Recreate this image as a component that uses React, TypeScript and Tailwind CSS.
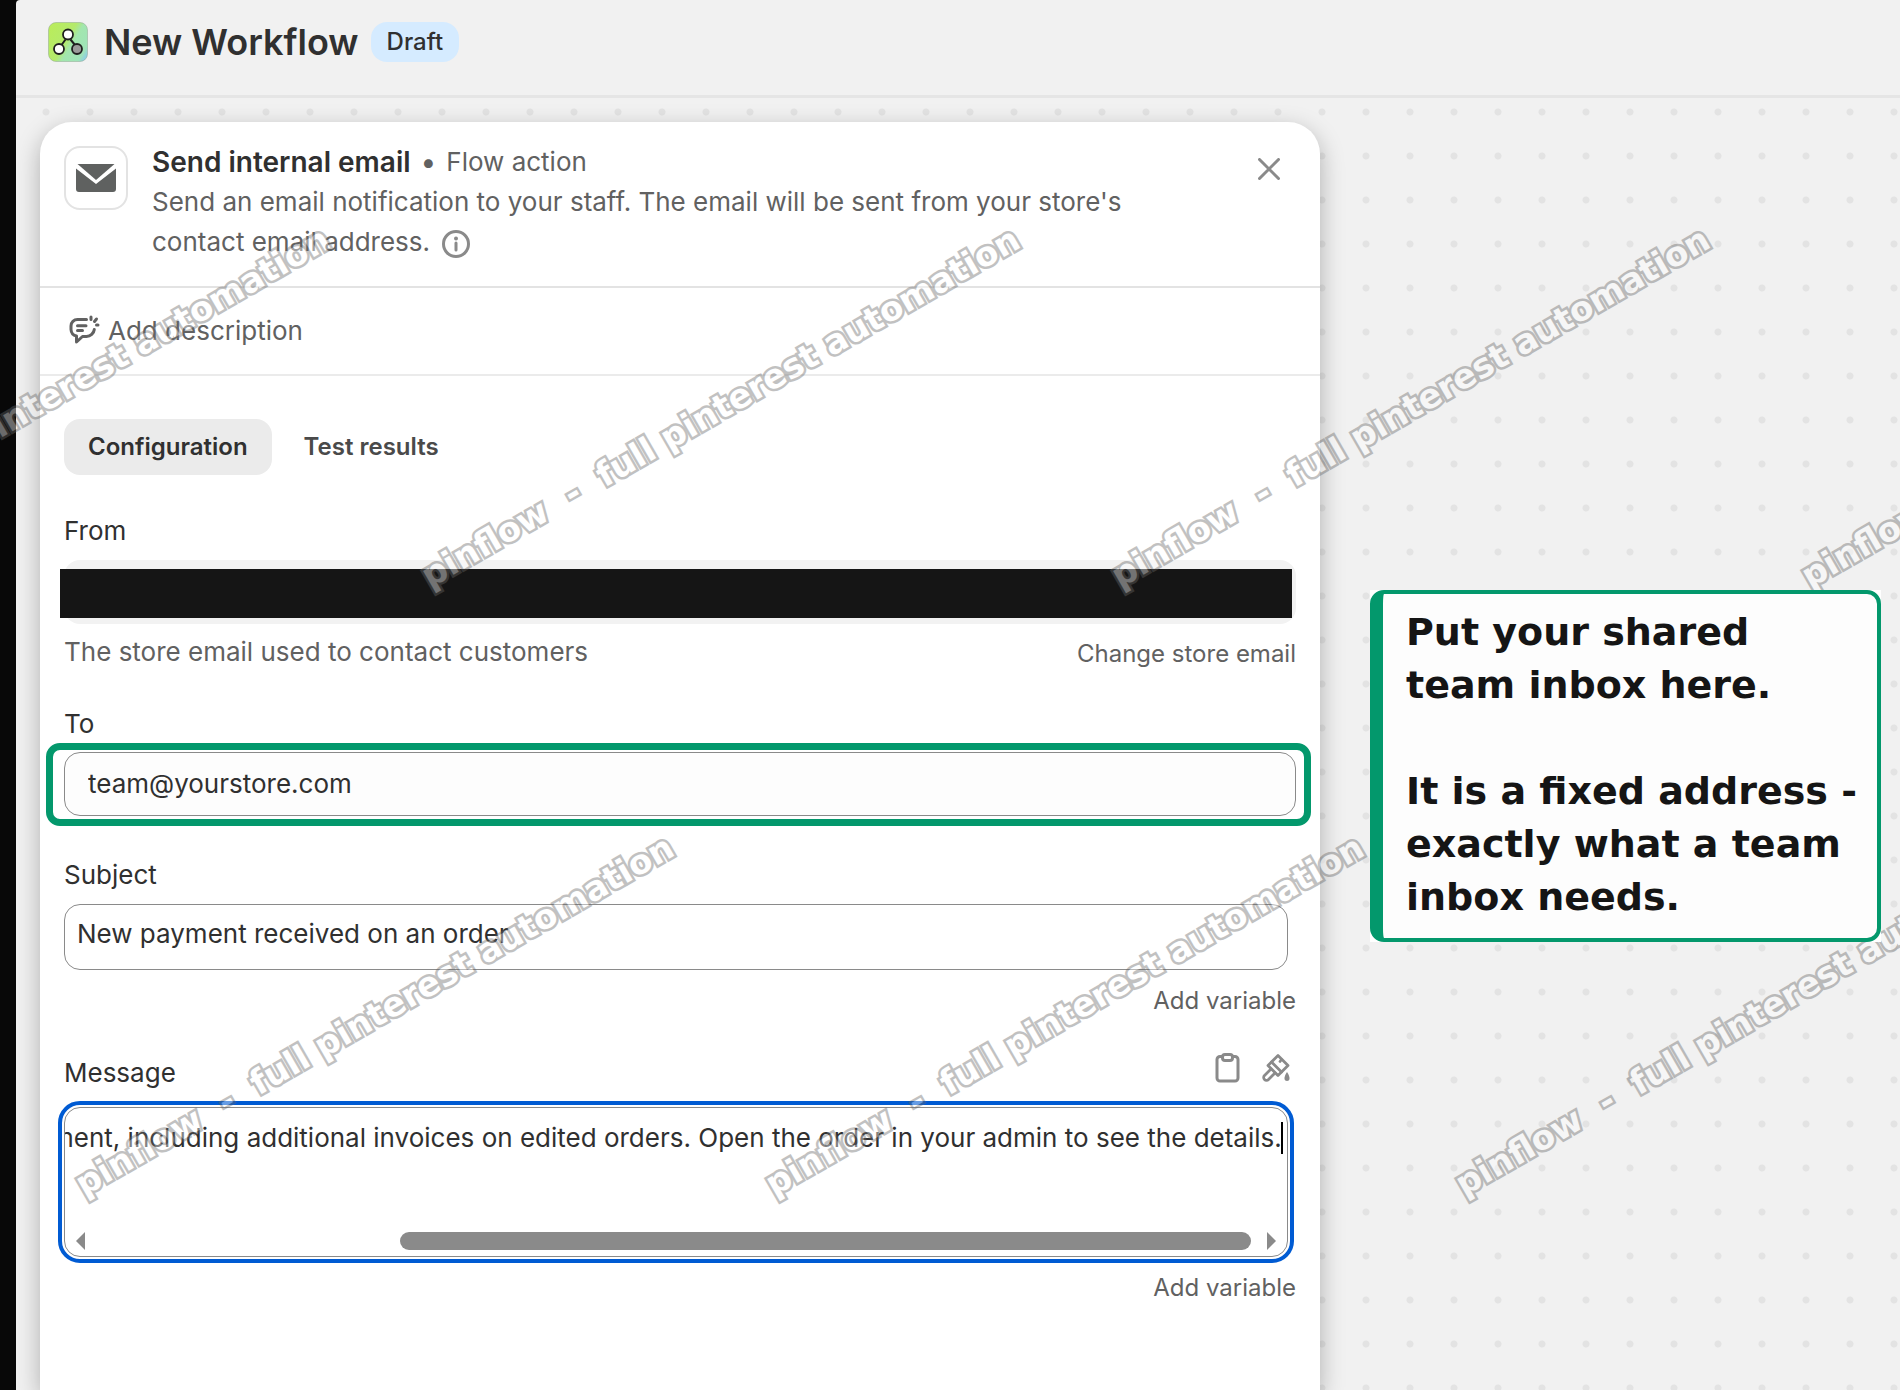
import { useEffect, useRef } from 'react';

const MARK_TEXT = 'pinflow\u00a0\u00a0-\u00a0\u00a0full pinterest automation';

function Watermark({ place }: { place: string }) {
  return (
    <span
      className={`absolute origin-bottom-left -rotate-30 whitespace-nowrap font-['DejaVu_Sans'] text-[34px] leading-8 font-bold text-white opacity-40 [-webkit-text-stroke:5px_#666] [paint-order:stroke_fill] ${place}`}
    >
      {MARK_TEXT}
    </span>
  );
}

function WorkflowLogo() {
  return (
    <svg viewBox="0 0 40 40" className="size-10 shrink-0" aria-hidden="true">
      <defs>
        <linearGradient id="logo" x1="0" y1="0.2" x2="1" y2="0.8">
          <stop offset="0" stopColor="#b9ec5c" />
          <stop offset="0.45" stopColor="#b4ea6c" />
          <stop offset="0.6" stopColor="#a2e6ae" />
          <stop offset="0.9" stopColor="#9fe4b8" />
          <stop offset="1" stopColor="#8fd0e0" />
        </linearGradient>
      </defs>
      <rect x="0.5" y="0.5" width="39" height="39" rx="7.5" fill="url(#logo)" stroke="#8fa68f" strokeOpacity="0.5" />
      <path d="M17.5 17.5 13.5 23M22.5 17.5 27 23" stroke="#1f1f1f" strokeWidth="2" />
      <circle cx="20" cy="12.500" r="5" fill="#fff" stroke="#1f1f1f" strokeWidth="1.800" />
      <circle cx="11" cy="27" r="5" fill="#fff" stroke="#1f1f1f" strokeWidth="1.800" />
      <circle cx="29" cy="27" r="5" fill="#9a9a9a" stroke="#1f1f1f" strokeWidth="1.800" />
    </svg>
  );
}

const linkClass = 'text-2xl leading-8 text-[#616161]';
const labelClass = 'text-[26px] leading-10 text-[#303030]';

export default function App() {
  const message = useRef<HTMLTextAreaElement>(null);
  useEffect(() => {
    if (message.current) message.current.scrollLeft = message.current.scrollWidth;
  }, []);

  return (
    <div className="relative flex min-h-screen overflow-hidden bg-[#080808] font-['Inter',sans-serif] text-[#303030]">
      <div className="ml-4 flex min-w-0 flex-1 flex-col rounded-tl-sm bg-[#f1f1f1]">
        <header className="flex h-[98px] items-start border-b-[3px] border-[#e5e5e5] px-8 pt-[22px]">
          <WorkflowLogo />
          <h1 className="ml-4 text-4xl leading-10 font-semibold">New Workflow</h1>
          <span className="ml-3 rounded-2xl bg-[#d5ebff] px-4 text-2xl leading-10 font-medium">Draft</span>
        </header>

        <main className="flex flex-1 items-stretch bg-[radial-gradient(circle,#e3e3e3_3px,transparent_4px)] bg-size-[44px_44px] bg-position-[8px_-8px] pt-6 pr-[19px] pl-6">
          <section className="min-w-0 flex-1 rounded-t-[32px] bg-white shadow-[0_8px_24px_rgba(0,0,0,0.28)]">
            <div className="flex items-start border-b-2 border-[#e3e3e3] px-6 pt-6 pb-6">
              <div className="flex size-16 shrink-0 items-center justify-center rounded-2xl border-2 border-[#e3e3e3]">
                <svg viewBox="0 0 40 28" className="h-7 w-10" fill="#5f6160" aria-hidden="true">
                  <path d="M1.500 0h37L20 16z" />
                  <path d="M0 4.500 20 20 40 4.500V25a3 3 0 0 1-3 3H3a3 3 0 0 1-3-3z" />
                </svg>
              </div>
              <div className="-mt-1 ml-6 flex-1 text-[26px] leading-10 text-[#616161]">
                <h2 className="flex">
                  <span className="text-[28px] font-semibold text-[#303030]">Send internal email</span>
                  <span className="mx-2.5 text-[28px]">•</span>
                  <span>Flow action</span>
                </h2>
                <p className="max-w-[1000px]">
                  Send an email notification to your staff. The email will be sent from your store's contact email
                  address.
                  <svg viewBox="0 0 28 28" className="ml-3 inline size-7" fill="none" stroke="#8a8a8a" aria-hidden="true">
                    <circle cx="14" cy="14" r="12.500" strokeWidth="3" />
                    <path d="M14 13v7" strokeWidth="3" strokeLinecap="round" />
                    <circle cx="14" cy="8.500" r="2" fill="#8a8a8a" stroke="none" />
                  </svg>
                </p>
              </div>
              <button type="button" aria-label="Close" className="mt-2 mr-3 p-1">
                <svg viewBox="0 0 22 22" className="size-[22px]" stroke="#8a8a8a" strokeWidth="3" strokeLinecap="round">
                  <path d="M1.500 1.500 20.500 20.500M20.500 1.500 1.500 20.500" />
                </svg>
              </button>
            </div>

            <div className="flex h-[88px] items-center border-b-2 border-[#ebebeb] px-7">
              <button type="button" className="flex items-center gap-2 text-[26px] leading-10 text-[#616161]">
                <svg viewBox="0 0 32 32" className="size-8" fill="none" stroke="#616161" strokeWidth="3" strokeLinecap="round" aria-hidden="true">
                  <path d="M18.500 4.500H9.500A6.500 6.500 0 0 0 3 11v3.500a7 7 0 0 0 5.500 6.500v6l6-5.500H18.500a8 8 0 0 0 7.800-7" strokeLinejoin="round" />
                  <path d="M9.500 10.700H18M9.500 15.500h5M23 2v2.500M28.500 4l-2 2.500M28.500 10h1.500" />
                </svg>
                Add description
              </button>
            </div>

            <form className="px-6 pt-[43px] pb-[63px]" onSubmit={(e) => e.preventDefault()}>
              <div className="flex gap-2 text-2xl leading-8">
                <button type="button" className="rounded-2xl bg-[#ebebeb] px-6 py-3 font-[580]">Configuration</button>
                <button type="button" className="rounded-2xl px-6 py-3 font-[580] text-[#4a4a4a]">Test results</button>
              </div>

              <div className="mt-9">
                <label htmlFor="from" className={`block ${labelClass}`}>From</label>
                <div className="relative mt-[9px]">
                  <input id="from" readOnly className="block h-16 w-full rounded-2xl bg-[#f2f2f2] px-6" />
                  <div className="absolute top-[9px] right-1 -left-1 h-[49px] bg-[#151515]" />
                </div>
                <div className="mt-2 flex items-end justify-between">
                  <p className="text-[26px] leading-10 text-[#616161]">The store email used to contact customers</p>
                  <button type="button" className={`${linkClass} pb-0.5`}>Change store email</button>
                </div>
              </div>

              <div className="mt-8">
                <label htmlFor="to" className={`block ${labelClass}`}>To</label>
                <div className="relative mt-2">
                  <input
                    id="to"
                    defaultValue="team@yourstore.com"
                    className="block h-16 w-full rounded-2xl border border-[#8a8a8a] bg-[#fdfdfd] px-[23px] pb-0.5 text-[26px]"
                  />
                  <div className="pointer-events-none absolute -top-[9px] -right-[15px] -bottom-[10px] -left-[18px] rounded-[14px] border-[7px] border-[#03986c]" />
                </div>
              </div>

              <div className="mt-[39px]">
                <label htmlFor="subject" className={`block ${labelClass}`}>Subject</label>
                <div className="mt-[9px] pr-2">
                  <input
                    id="subject"
                    defaultValue="New payment received on an order"
                    className="block h-[66px] w-full rounded-2xl border border-[#8a8a8a] bg-white px-3 pb-2 text-[26px]"
                  />
                </div>
                <div className="mt-[15px] flex justify-end">
                  <button type="button" className={linkClass}>Add variable</button>
                </div>
              </div>

              <div className="mt-9">
                <div className="flex items-start justify-between">
                  <label htmlFor="message" className={labelClass}>Message</label>
                  <div className="flex gap-4 pr-1">
                    <button type="button" aria-label="Paste">
                      <svg viewBox="0 0 32 32" className="size-8" fill="none" stroke="#8a8a8a" strokeWidth="3" strokeLinejoin="round">
                        <path d="M11 3.500H8a3 3 0 0 0-3 3V25a3 3 0 0 0 3 3h15a3 3 0 0 0 3-3V6.500a3 3 0 0 0-3-3h-3" />
                        <rect x="10.500" y="1.500" width="10" height="6" rx="2.500" />
                      </svg>
                    </button>
                    <button type="button" aria-label="Format">
                      <svg viewBox="0 0 32 32" className="size-8" fill="none" stroke="#8a8a8a" strokeWidth="2.800" strokeLinejoin="round" strokeLinecap="round">
                        <path d="M18 2.500 28 12.500 18 22.500 8 12.500z" />
                        <path d="M11.500 9 21.500 19M21.500 6.500l-1.500 2" />
                        <path d="M11 16 4.500 22.500a2.800 2.800 0 0 0 4 4L15 20" />
                        <path d="M27 19c4 6 2.700 9 0 9s-4-3 0-9z" fill="#8a8a8a" stroke="none" />
                      </svg>
                    </button>
                  </div>
                </div>
                <div className="mt-[14px] pr-2">
                  <div className="relative h-[150px] overflow-hidden rounded-2xl border border-[#8a8a8a] outline-4 outline-offset-2 outline-[#005bd3]">
                    <textarea
                      id="message"
                      ref={message}
                      wrap="off"
                      defaultValue="payment, including additional invoices on edited orders. Open the order in your admin to see the details."
                      className="block h-[110px] w-[calc(100%-5px)] resize-none overflow-x-auto overflow-y-hidden pt-3.5 text-[26px] leading-8 whitespace-pre outline-none [scrollbar-width:none]"
                    />
                    <div className="absolute top-3.5 right-1 h-8 w-0.5 bg-black" />
                    <div className="flex items-center px-[11px] pt-3.5">
                      <svg viewBox="0 0 9 18" className="h-[18px] w-[9px]" fill="#8a8a8a" aria-hidden="true"><path d="M9 0v18L0 9z" /></svg>
                      <div className="ml-4 flex flex-1 justify-end">
                        <div className="h-[18px] w-[74%] rounded-full bg-[#8a8a8a]" />
                      </div>
                      <svg viewBox="0 0 9 18" className="ml-4 h-[18px] w-[9px]" fill="#8a8a8a" aria-hidden="true"><path d="M0 0v18l9-9z" /></svg>
                    </div>
                  </div>
                </div>
                <div className="mt-[15px] flex justify-end">
                  <button type="button" className={linkClass}>Add variable</button>
                </div>
              </div>
            </form>
          </section>

          <aside className="relative z-10 mt-[468px] ml-[50px] w-[511px] shrink-0 self-start bg-white">
            <p className="rounded-[14px] border-4 border-l-[13px] border-[#03986c] bg-[#fdfdfd] pt-3 pb-[14px] pl-[23px] font-['DejaVu_Sans'] text-[38px] leading-[53px] font-bold text-[#151515]">
              Put your shared
              <br />
              team inbox here.
              <br />
              <br />
              It is a fixed address -
              <br />
              exactly what a team
              <br />
              inbox needs.
            </p>
          </aside>
        </main>
      </div>

      <div aria-hidden="true" className="pointer-events-none absolute inset-0 overflow-hidden">
        <Watermark place="top-[560px] left-[-258px]" />
        <Watermark place="top-[560px] left-[432px]" />
        <Watermark place="top-[560px] left-[1122px]" />
        <Watermark place="top-[560px] left-[1812px]" />
        <Watermark place="top-[1168px] left-[86px]" />
        <Watermark place="top-[1168px] left-[776px]" />
        <Watermark place="top-[1168px] left-[1466px]" />
      </div>
    </div>
  );
}
